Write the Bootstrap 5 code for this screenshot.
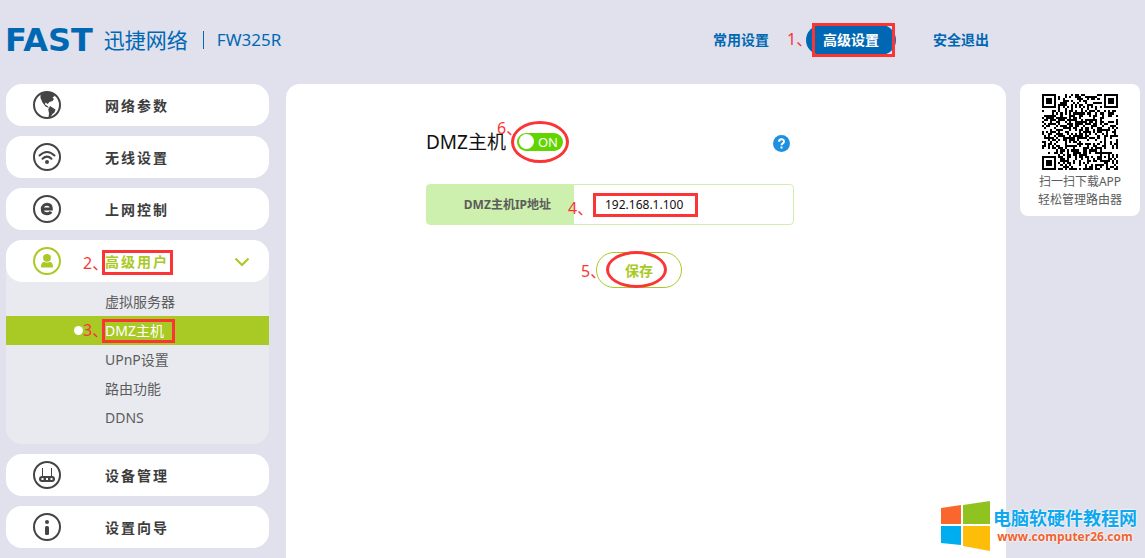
<!DOCTYPE html>
<html lang="zh-CN">
<head>
<meta charset="utf-8">
<meta name="viewport" content="width=device-width, initial-scale=1">
<title>FAST FW325R</title>
<link href="https://cdn.jsdelivr.net/npm/bootstrap@5.3.0/dist/css/bootstrap.min.css" rel="stylesheet">
<style>
:root { --fw-blue: #0068b3; --fw-lime: #a9c924; --fw-red: #fb3436; }
body { background: #e0e1ed; color: #3c3c3c; font: 14px/20px "Noto Sans", "Noto Sans CJK SC", sans-serif; }
a { text-decoration: none; }
.top-bar { height: 84px; padding: 0 139px 4px 5px; color: var(--fw-blue); }
.brand-latin { font: bold 32px/32px "DejaVu Sans", sans-serif; }
.brand-cn { font-size: 21px; font-weight: 400; line-height: 28px; margin-left: 11px; }
.brand-rule { width: 1px; height: 18px; background: var(--fw-blue); margin: 0 13px 0 15px; }
.brand-model { font-size: 17px; }
.top-nav { gap: 20px; }
.top-link { color: var(--fw-blue); font-weight: 700; width: 90px; line-height: 30px; border-radius: 15px; text-align: center; }
.top-link:last-child { width: 90px; }
.top-link.current { background: var(--fw-blue); color: #fff; }
.page-cols { padding: 0 5px 0 6px; }
.side-col { width: 263px; margin-right: 17px; padding-bottom: 10px; gap: 10px; }
.menu-card { height: 42px; border-radius: 16px; background: #fff; color: #3c3c3c; padding: 2px 20px 0 27px; font-weight: 700; letter-spacing: 2px; }
.menu-card svg:first-child { width: 28px; height: 28px; margin: 0 44px 2px 0; }
.menu-card.open { color: var(--fw-lime); }
.menu-group { background: #e8eaf0; border-radius: 16px; }
.sub-menu { padding: 5px 0 12px; }
.sub-menu a { display: block; line-height: 29px; padding-left: 99px; color: #5c5c5c; }
.sub-menu a.current { background: var(--fw-lime); color: #fff; position: relative; }
.sub-menu a.current::before { content: ""; position: absolute; left: 68px; top: 10px; width: 9px; height: 9px; border-radius: 50%; background: #fff; }
.main-panel { background: #fff; border-radius: 14px 14px 0 0; padding: 44px 140px 0; }
.form-area { max-width: 368px; }
.panel-title { font-size: 19px; line-height: 28px; color: #111; font-weight: 400; }
.switch-pill { width: 46px; height: 18px; border: 0; border-radius: 9px; background: #62d400; color: #fff; font-size: 13px; line-height: 18px; padding: 0 5px 0 2px; }
.switch-wrap { margin: 0 0 1px 11px; }
.switch-knob { width: 15px; height: 15px; border-radius: 50%; background: #fff; }
.help-btn { width: 17px; height: 17px; border: 0; padding: 0; background: none; margin-top: 3px; }
.field-row { height: 41px; border: 1px solid #cdf0ae; border-radius: 4px; font-size: 12px; margin-top: 28px; }
.field-row label { width: 147px; background: #cdf0ae; color: #5c5c5c; font-weight: 700; padding-right: 23px; }
.field-row input { border: 0; outline: 0; min-width: 0; padding: 0 31px; color: #111; background: none; }
.save-btn { width: 86px; height: 36px; border: 1px solid var(--fw-lime); border-radius: 18px; background: #fff; color: var(--fw-lime); font-weight: 700; padding: 2px 0 0; margin: 27px 0 0 170px; }
.qr-card { width: 120px; height: 132px; margin-left: 14px; border-radius: 8px; background: #fff; color: #5c5c5c; font-size: 12px; line-height: 18px; padding-top: 10px; }
.qr-card svg { width: 76px; height: 76px; margin-bottom: 3px; }
/* tutorial marks lying over the router page */
.step-no, .step-box, .step-ring { position: absolute; pointer-events: none; }
.step-no { color: var(--fw-red); font-size: 16px; line-height: 20px; font-weight: 400; letter-spacing: 0; white-space: nowrap; font-feature-settings: "halt" 1; }
.step-box { border: 3px solid var(--fw-red); }
.step-ring { border: 3px solid var(--fw-red); border-radius: 50%; }
.no-1 { left: -19px; top: 4px; }
.box-1 { left: 6px; top: -2px; width: 83px; height: 34px; }
.no-2 { left: 77px; top: 13px; }
.box-2 { left: 96px; top: 10px; width: 71px; height: 25px; }
.no-3 { left: 77px; top: 4px; }
.box-3 { left: 96px; top: 3px; width: 73px; height: 24px; }
.no-4 { left: 141px; top: 13px; }
.box-4 { left: 166px; top: 8px; width: 105px; height: 24px; }
.no-5 { left: -16px; top: 8px; }
.ring-5 { left: 9px; top: -2px; width: 61px; height: 37px; }
.no-6 { left: -20px; top: -15px; }
.ring-6 { left: -6px; top: -12px; width: 58px; height: 42px; }
.site-mark { position: absolute; right: 8px; top: 501px; font-weight: 700; }
.site-mark svg { width: 51px; height: 50px; }
.site-name { color: #0fa8ee; font-size: 18px; line-height: 20px; }
.site-url { color: #f0622d; font: bold 12px/18px "Open Sans", sans-serif; }
.site-text { text-shadow: 0 0 2px #fff, 0 0 2px #fff; padding-top: 7px; margin-left: 2px; }
</style>
</head>
<body class="position-relative">
<div class="d-flex flex-column min-vh-100">
  <header class="top-bar d-flex align-items-center">
    <div class="d-flex align-items-center flex-grow-1">
      <span class="brand-latin">FAST</span>
      <span class="brand-cn">迅捷网络</span>
      <span class="brand-rule"></span>
      <span class="brand-model">FW325R</span>
    </div>
    <nav class="top-nav d-flex">
      <a class="top-link" href="#">常用设置</a>
      <a class="top-link current position-relative" href="#">高级设置
        <span class="step-no no-1">1、</span>
        <span class="step-box box-1"></span>
      </a>
      <a class="top-link" href="#">安全退出</a>
    </nav>
  </header>
  <div class="page-cols d-flex flex-grow-1">
    <nav class="side-col d-flex flex-column flex-shrink-0">
      <a class="menu-card d-flex align-items-center" href="#">
        <svg viewBox="0 0 28 28"><circle cx="14" cy="14" r="13" fill="none" stroke="#444" stroke-width="2"/><path fill="#444" d="M7.500 3.500L13 1l5 .8 4 3-2.500 1.700 1.500 1.500-1.500 2-3 1-1.800 2-2.200-1.500-.5 2 2.500 1.500 1.500 2-3.500-1.500-3-4L7.500 7zM17 15l5.500 3.500-1 3-2 1.500-2.500 4h-1.500l.5-5-.8-3.500z"/></svg>网络参数</a>
      <a class="menu-card d-flex align-items-center" href="#">
        <svg viewBox="0 0 28 28" fill="none" stroke="#444" stroke-width="2"><circle cx="14" cy="14" r="13"/><path d="M6.500 12.500Q14 5.500 21.500 12.500M9.500 15.800Q14 11.500 18.500 15.800" stroke-linecap="round"/><circle cx="14" cy="19" r="2" fill="#444" stroke="none"/></svg>无线设置</a>
      <a class="menu-card d-flex align-items-center" href="#">
        <svg viewBox="0 0 28 28" fill="none" stroke="#444"><circle cx="14" cy="14" r="13" stroke-width="2"/><path d="M9.500 14H18.300C18.300 10.800 16.500 9.300 14 9.300S9.300 11 9.300 14s2 4.700 4.700 4.700c1.900 0 3.200-.6 4-2" stroke-width="3"/></svg>上网控制</a>
      <div class="menu-group">
        <a class="menu-card open d-flex align-items-center position-relative" href="#">
          <svg viewBox="0 0 28 28"><circle cx="14" cy="14" r="13" fill="none" stroke="#a9c924" stroke-width="2"/><circle cx="14" cy="10.800" r="3.900" fill="#a9c924"/><path d="M8 20.500c0-4 1.200-5.500 3.500-5.500q2.500 1 5 0c2.300 0 3.500 1.500 3.500 5.500z" fill="#a9c924"/></svg>高级用户
          <svg class="ms-auto" width="14" height="10" viewBox="0 0 14 10" fill="none" stroke="#a9c924" stroke-width="2"><path d="M.5 1.500L7 8l6.500-6.500"/></svg>
          <span class="step-no no-2">2、</span>
          <span class="step-box box-2"></span>
        </a>
        <div class="sub-menu">
          <a href="#">虚拟服务器</a>
          <a class="current" href="#">DMZ主机
            <span class="step-no no-3">3、</span>
            <span class="step-box box-3"></span>
          </a>
          <a href="#">UPnP设置</a>
          <a href="#">路由功能</a>
          <a href="#">DDNS</a>
        </div>
      </div>
      <a class="menu-card d-flex align-items-center" href="#">
        <svg viewBox="0 0 28 28"><circle cx="14" cy="14" r="13" fill="none" stroke="#444" stroke-width="2"/><path d="M9.500 7v9M18.500 7v9" stroke="#444"/><rect x="6" y="15" width="16" height="6" rx="3" fill="#444"/><path d="M8.500 18h2M13 18h2M17.500 18h2" stroke="#fff" stroke-width="2"/></svg>设备管理</a>
      <a class="menu-card d-flex align-items-center" href="#">
        <svg viewBox="0 0 28 28"><circle cx="14" cy="14" r="13" fill="none" stroke="#444" stroke-width="2"/><circle cx="14" cy="9" r="2" fill="#444"/><rect x="12" y="13" width="4" height="9" rx="1.500" fill="#444"/></svg>设置向导</a>
    </nav>
    <main class="main-panel flex-grow-1">
      <form class="form-area" onsubmit="return false">
        <div class="d-flex align-items-center">
          <h1 class="panel-title mb-0" id="dmz-title">DMZ主机</h1>
          <div class="switch-wrap position-relative d-flex">
            <button type="button" class="switch-pill d-flex align-items-center justify-content-between" role="switch" aria-checked="true" aria-labelledby="dmz-title"><span class="switch-knob"></span>ON</button>
            <span class="step-no no-6">6、</span>
            <span class="step-ring ring-6"></span>
          </div>
          <button type="button" class="help-btn d-flex ms-auto me-1" aria-label="帮助"><svg width="17" height="17" viewBox="0 0 17 17"><circle cx="8.500" cy="8.500" r="8.500" fill="#1e8fe1"/><path d="M6 6.800C6 3.500 11 3.500 11 6.500c0 1.900-2.500 1.800-2.500 3.800" fill="none" stroke="#fff" stroke-width="2"/><rect x="7.500" y="11.500" width="2" height="2" fill="#fff"/></svg></button>
        </div>
        <div class="field-row d-flex position-relative">
          <label class="d-flex align-items-center justify-content-end flex-shrink-0" for="dmz-ip">DMZ主机IP地址</label>
          <input class="flex-grow-1" id="dmz-ip" type="text" value="192.168.1.100">
          <span class="step-no no-4">4、</span>
          <span class="step-box box-4"></span>
        </div>
        <button type="submit" class="save-btn position-relative">保存
          <span class="step-no no-5">5、</span>
          <span class="step-ring ring-5"></span>
        </button>
      </form>
    </main>
    <aside class="qr-card text-center flex-shrink-0">
      <svg class="d-block mx-auto" id="qr" viewBox="0 0 37 37" shape-rendering="crispEdges" role="img" aria-label="QR"><path fill="#000"/></svg>
      <div>扫一扫下载APP</div>
      <div>轻松管理路由器</div>
    </aside>
  </div>
</div>
<div class="site-mark d-flex">
  <svg viewBox="0 0 51 50"><path d="M1 7l20-3v19H1z" fill="#fa672e"/><path d="M23 4l27-4v23H23z" fill="#90c31f"/><path d="M1 25h20v19L1 42z" fill="#00adef"/><path d="M23 25h27v25l-27-5z" fill="#fdbd08"/></svg>
  <div class="site-text text-center"><div class="site-name">电脑软硬件教程网</div><div class="site-url">www.computer26.com</div></div>
</div>
<script src="https://cdn.jsdelivr.net/npm/bootstrap@5.3.0/dist/js/bootstrap.bundle.min.js"></script>
<script>
// 37 x 37 code: three finder squares, one alignment square, timing lines and data cells
(function () {
  var n = 37, d = '', seed = 20;
  function ring(x, y, cx, cy) { return Math.max(Math.abs(x - cx), Math.abs(y - cy)); }
  for (var y = 0; y < n; y++) for (var x = 0; x < n; x++) {
    seed = seed * 16807 % 2147483647;
    var on = seed / 2147483647 < 0.5;
    [[3, 3], [33, 3], [3, 33]].forEach(function (c) {
      var r = ring(x, y, c[0], c[1]);
      if (r <= 4) on = r < 2 || r === 3;
    });
    var a = ring(x, y, 30, 30);
    if (a <= 2) on = a !== 1;
    if (y === 6 && x > 7 && x < 29) on = x % 2 === 0;
    if (x === 6 && y > 7 && y < 29) on = y % 2 === 0;
    if (on) d += 'M' + x + ' ' + y + 'h1v1h-1z';
  }
  document.querySelector('#qr path').setAttribute('d', d);
})();
</script>
</body>
</html>
